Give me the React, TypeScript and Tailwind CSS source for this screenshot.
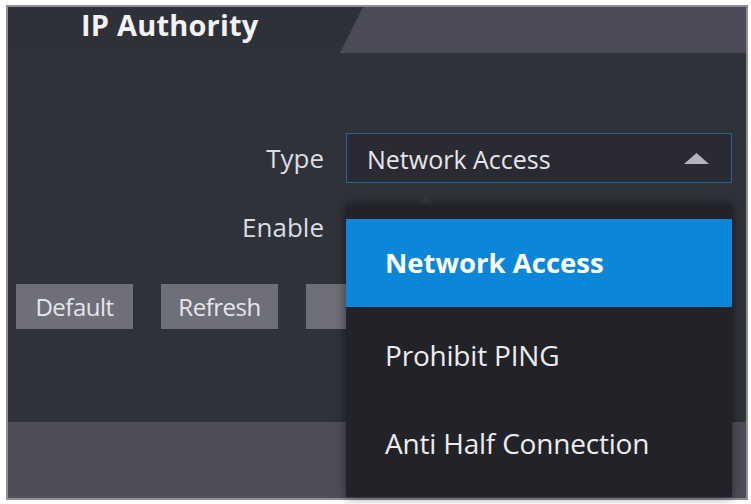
import React from "react";

const font = { fontFamily: '"Open Sans", "Liberation Sans", sans-serif' };

const options = ["Network Access", "Prohibit PING", "Anti Half Connection"];

const App = () => {
  return (
    <div className="h-[504px] w-[751px] bg-white pl-[6px] pt-[5px]" style={font}>
      <div className="flex h-[495px] w-[742px] flex-col border-2 border-[#8e8e94] bg-[#30323a]">
        {/* HEADER */}
        <div className="flex h-[46px] shrink-0 bg-[#4b4b57]">
          <div className="h-full w-[355px] bg-[#2f3139] pl-[73px] [clip-path:polygon(0_0,100%_0,calc(100%-23px)_100%,0_100%)]">
            <h1 className="text-[29px] leading-[35px] font-bold tracking-[0.2px] text-[#f2f2f4]">IP Authority</h1>
          </div>
        </div>

        {/* BODY */}
        <div className="relative flex-1 bg-[#30323a] pt-[80px]">
          <div className="flex items-center">
            <span className="w-[317px] pr-px text-right text-[26px] text-[#dcdce2]">Type</span>
            <div className="ml-[21px] flex h-[50px] w-[386px] items-center justify-between border border-[#25648f] bg-[#2a2b32] pl-5 pr-[22px]">
              <span className="pt-1 text-[25px] text-[#e6e6ea]">Network Access</span>
              <svg width="25" height="11" viewBox="0 0 25 11">
                <polygon points="12.5,0 25,11 0,11" fill="#b4b4bc" />
              </svg>
            </div>
          </div>

          <div className="mt-[19px] flex h-[50px] items-center">
            <span className="w-[317px] pr-px text-right text-[26px] text-[#dcdce2]">Enable</span>
          </div>

          <div className="mt-[32px] flex gap-[28px] pl-2">
            {["Default", "Refresh"].map((b) => (
              <button
                key={b}
                className="h-[45px] w-[117px] bg-[#6e6f77] text-[24px] tracking-[-0.5px] text-[#e6e6ec]"
              >
                {b}
              </button>
            ))}
            <button className="h-[45px] w-[117px] bg-[#6e6f77] pl-[40px] text-left text-[24px] tracking-[-0.5px] text-[#e6e6ec]">
              Save
            </button>
          </div>

          {/* DROPDOWN MENU */}
          <div className="absolute left-[338px] top-[144px] w-[386px]">
            <div className="ml-[72px] h-0 w-0 border-x-[8px] border-b-[8px] border-x-transparent border-b-[#393a42]" />
            <div className="bg-[#222329] py-[14px] shadow-[0_0_10px_rgba(0,0,0,0.55)]">
              {options.map((o, i) => (
                <div
                  key={o}
                  className={
                    i === 0
                      ? "flex h-[88px] items-center bg-[#0c86d8] pl-[39px] text-[27.5px] font-bold text-white"
                      : "flex h-[88px] items-center pl-[39px] pt-2 text-[28px] font-medium tracking-[-0.2px] text-[#ececf0]"
                  }
                >
                  {o}
                </div>
              ))}
            </div>
          </div>
        </div>

        {/* FOOTER BAND */}
        <div className="h-[76px] shrink-0 bg-[#4e4e58]" />
      </div>
    </div>
  );
};

export default App;
